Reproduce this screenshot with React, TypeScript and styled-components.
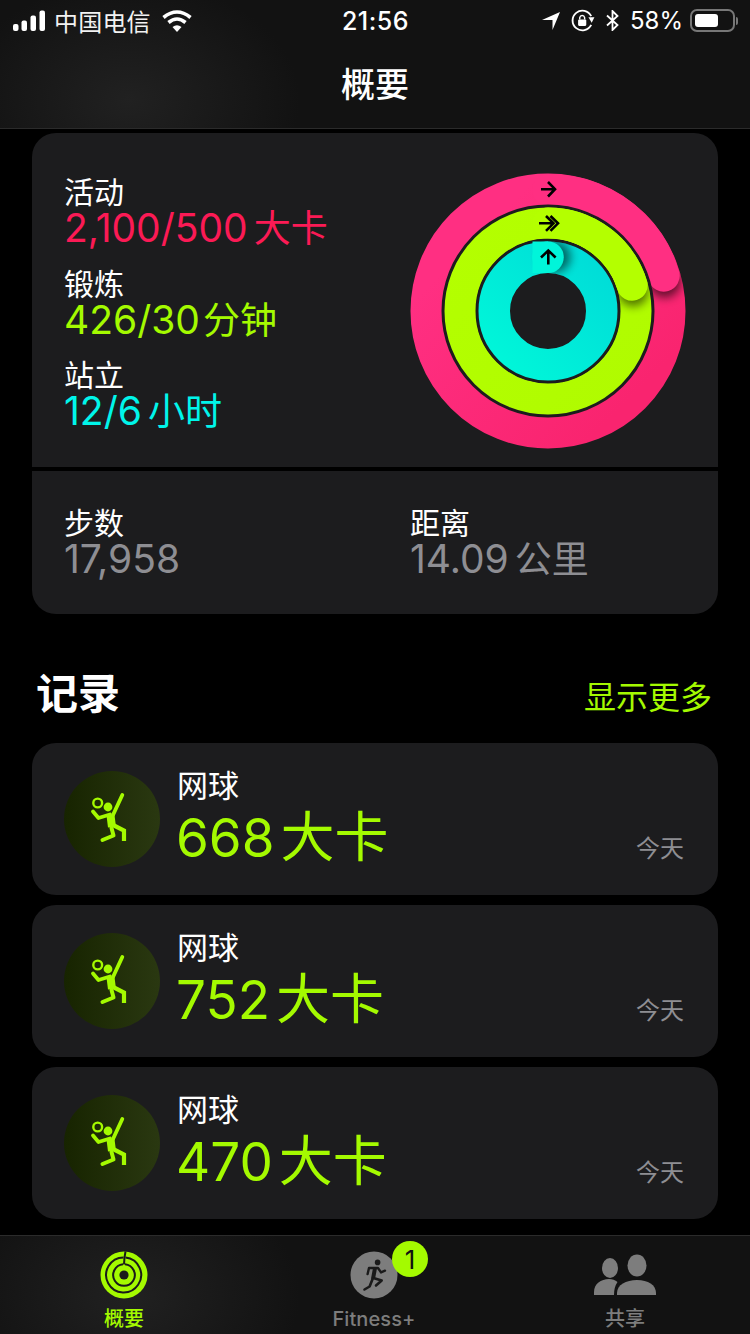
import { FC } from "react";
import styled, { createGlobalStyle } from "styled-components";

const GREEN = "#a4fa00";
const CARD = "#1c1c1e";
const FONT = `Inter, "Noto Sans CJK SC", "Noto Sans", sans-serif`;

const GlobalStyle = createGlobalStyle`
  html, body {
    margin: 0;
    padding: 0;
    background: #000;
  }
  * {
    box-sizing: border-box;
  }
`;

const records = ["668", "752", "470"];

const polar = (r: number, deg: number) => {
  const a = (deg * Math.PI) / 180;
  return { x: 140 + r * Math.sin(a), y: 140 - r * Math.cos(a) };
};

const arcPath = (r: number, deg: number) => {
  const end = polar(r, deg);
  const large = deg > 180 ? 1 : 0;
  return `M140 ${140 - r}A${r} ${r} 0 ${large} 1 ${end.x} ${end.y}`;
};

const Rings: FC = () => {
  const pinkEnd = polar(121, 73);
  const greenEnd = polar(88, 73);
  return (
    <RingSvg viewBox="0 0 280 280" width="280" height="280">
      <defs>
        <linearGradient id="pink" x1="0.2" y1="0.2" x2="0.85" y2="0.85">
          <stop offset="0" stopColor="#ff2f82" />
          <stop offset="1" stopColor="#f9246f" />
        </linearGradient>
        <linearGradient id="lime" x1="0" y1="0" x2="1" y2="1">
          <stop offset="0" stopColor="#b4ff00" />
          <stop offset="1" stopColor="#b0fb00" />
        </linearGradient>
        <linearGradient id="cyan" x1="0" y1="1" x2="1" y2="0">
          <stop offset="0" stopColor="#00f7d9" />
          <stop offset="1" stopColor="#00dcd8" />
        </linearGradient>
        <filter id="blur" x="-60%" y="-60%" width="220%" height="220%">
          <feGaussianBlur stdDeviation="5" />
        </filter>
        <clipPath id="pinkClip">
          <path clipRule="evenodd" d="M140 2.500a137.500 137.500 0 1 0 .01 0zM140 34a106 106 0 1 1 -.01 0z" />
        </clipPath>
        <clipPath id="limeClip">
          <path clipRule="evenodd" d="M140 36.500a103.500 103.500 0 1 0 .01 0zM140 67.500a72.500 72.500 0 1 1 -.01 0z" />
        </clipPath>
        <clipPath id="cyanClip">
          <path clipRule="evenodd" d="M140 70.500a69.500 69.500 0 1 0 .01 0zM140 102a38 38 0 1 1 -.01 0z" />
        </clipPath>
      </defs>

      <circle cx="140" cy="140" r="121" fill="none" stroke="url(#pink)" strokeWidth="33" />
      <g clipPath="url(#pinkClip)">
        <circle cx={pinkEnd.x + 1} cy={pinkEnd.y + 6} r="16" fill="#000" opacity="0.6" filter="url(#blur)" />
      </g>
      <path d={arcPath(121, 73)} fill="none" stroke="#ff2f82" strokeWidth="32" strokeLinecap="round" />

      <circle cx="140" cy="140" r="88" fill="none" stroke={CARD} strokeWidth="37" />
      <circle cx="140" cy="140" r="88" fill="none" stroke="url(#lime)" strokeWidth="31" />
      <g clipPath="url(#limeClip)">
        <circle cx={greenEnd.x + 1} cy={greenEnd.y + 6} r="15" fill="#000" opacity="0.55" filter="url(#blur)" />
      </g>
      <path d={arcPath(88, 73)} fill="none" stroke="#b4ff00" strokeWidth="31" strokeLinecap="round" />

      <circle cx="140" cy="140" r="55" fill="none" stroke={CARD} strokeWidth="34" />
      <circle cx="140" cy="140" r="53.750" fill="none" stroke="url(#cyan)" strokeWidth="31.500" />
      <g clipPath="url(#cyanClip)">
        <circle cx="147" cy="86" r="15.500" fill="#000" opacity="0.55" filter="url(#blur)" />
      </g>
      <circle cx="140" cy="86.250" r="15.750" fill="#00f5da" />
      <path d="M124.500 70.500H140V102H124.500Z" fill="#00f5da" />

      <g fill="none" stroke="#000" strokeWidth="2.600">
        <path d="M133 18.200H146.500M140 11L147 18.200L140 25.500" />
        <path d="M131 52.300H145M138 45L145.500 52.300L138 59.800M142.500 45L150 52.300L142.500 59.800" />
        <path d="M140.300 93.500V80M133 86.500L140.300 79.500L147.600 86.500" />
      </g>
    </RingSvg>
  );
};

const TennisIcon: FC = () => (
  <svg viewBox="0 0 96 96" width="96" height="96">
    <g fill="none" stroke={GREEN} strokeLinecap="round" strokeLinejoin="round">
      <circle cx="33.700" cy="32" r="4.400" strokeWidth="2.400" />
      <path d="M29 40.500L34.500 47L46 43.500" strokeWidth="3.800" />
      <path d="M49 44L58.300 24" strokeWidth="3.800" />
      <path d="M46.500 44L48 56" strokeWidth="8" strokeLinecap="butt" />
      <path d="M49 54L60 59.500V70" strokeWidth="4.200" strokeLinecap="butt" strokeLinejoin="miter" />
      <path d="M47.500 57L49.500 64.500L38.500 69" strokeWidth="4" />
    </g>
    <circle cx="44" cy="36" r="4.400" fill={GREEN} />
  </svg>
);

const App: FC = () => (
  <Page>
    <GlobalStyle />
    <Header>
      <StatusBar>
        <StatusLeft>
          <svg width="33" height="21" viewBox="0 0 33 21">
            <rect x="0" y="14" width="5.500" height="7" rx="2" fill="#fff" />
            <rect x="8.500" y="10.500" width="5.500" height="10.500" rx="2" fill="#fff" />
            <rect x="17.500" y="5.500" width="5.500" height="15.500" rx="2" fill="#fff" />
            <rect x="26.500" y="0.500" width="5.500" height="20.500" rx="2" fill="#fff" />
          </svg>
          <Carrier>中国电信</Carrier>
          <svg width="30" height="22" viewBox="0 0 30 22">
            <path d="M15 22L10.500 17Q15 13.500 19.500 17Z" fill="#fff" />
            <path d="M6.500 12.500Q15 5.500 23.500 12.500" fill="none" stroke="#fff" strokeWidth="3.600" />
            <path d="M1.500 7.500Q15 -3.500 28.500 7.500" fill="none" stroke="#fff" strokeWidth="3.600" />
          </svg>
        </StatusLeft>
        <Clock>21:56</Clock>
        <StatusRight>
          <svg width="18" height="18" viewBox="0 0 18 18">
            <path d="M18 0L10.500 18V8H0Z" fill="#fff" />
          </svg>
          <svg width="24" height="23" viewBox="0 0 22 21">
            <path d="M18.500 14.500A9 9 0 1 1 18.500 6.500" fill="none" stroke="#fff" strokeWidth="1.700" />
            <path d="M16 7.500L21.500 7.500L19 12.500Z" fill="#fff" />
            <rect x="6.500" y="9.500" width="7.500" height="6" rx="1" fill="#fff" />
            <path d="M8 9.500V7.800a2.300 2.300 0 0 1 4.500 0V9.500" fill="none" stroke="#fff" strokeWidth="1.300" />
          </svg>
          <svg width="13" height="21" viewBox="0 0 13 21">
            <path d="M1 5.500L11.500 15L6.500 20V1L11.500 6L1 15.500" fill="none" stroke="#fff" strokeWidth="1.800" />
          </svg>
          <Percent>58%</Percent>
          <BatteryBody>
            <BatteryFill />
          </BatteryBody>
          <BatteryTip />
        </StatusRight>
      </StatusBar>
      <NavTitle>概要</NavTitle>
    </Header>

    <Content>
      <Summary>
        <RingPanel>
          <Stats>
            <Stat>
              <Label>活动</Label>
              <Value color="#fb1a55">2,100/500<Unit>大卡</Unit></Value>
            </Stat>
            <Stat>
              <Label>锻炼</Label>
              <Value color={GREEN}>426/30<Unit gap={3}>分钟</Unit></Value>
            </Stat>
            <Stat>
              <Label>站立</Label>
              <Value color="#00f5ea">12/6<Unit>小时</Unit></Value>
            </Stat>
          </Stats>
          <Rings />
        </RingPanel>
        <TotalsPanel>
          <Stat>
            <Label>步数</Label>
            <Value color="#8e8e93">17,958</Value>
          </Stat>
          <Stat>
            <Label>距离</Label>
            <Value color="#8e8e93">14.09<Unit>公里</Unit></Value>
          </Stat>
        </TotalsPanel>
      </Summary>

      <SectionHead>
        <SectionTitle>记录</SectionTitle>
        <ShowMore>显示更多</ShowMore>
      </SectionHead>

      <RecordList>
        {records.map((value) => (
          <RecordCard key={value}>
            <RecordIcon>
              <TennisIcon />
            </RecordIcon>
            <RecordText>
              <RecordName>网球</RecordName>
              <RecordValue>{value}<RecordUnit>大卡</RecordUnit></RecordValue>
            </RecordText>
            <RecordDate>今天</RecordDate>
          </RecordCard>
        ))}
      </RecordList>
    </Content>

    <TabBar>
      <Tab>
        <svg width="48" height="48" viewBox="0 0 48 48">
          <circle cx="24" cy="24" r="23.500" fill={GREEN} />
          <g fill="none" stroke="#1a1a1a" strokeWidth="2">
            <path d="M25.500 6.600A17.500 17.500 0 1 1 23.500 6.500" />
            <path d="M25 13.300A10.800 10.800 0 1 1 23 13.300" />
            <path d="M25.500 0.500L24.500 6.500L24 13.500" />
          </g>
          <circle cx="24" cy="24" r="4.600" fill="#1a1a1a" />
        </svg>
        <TabLabel active>概要</TabLabel>
      </Tab>
      <Tab>
        <TabIconWrap>
          <svg width="48" height="48" viewBox="0 0 48 48">
            <circle cx="24" cy="24" r="23.500" fill="#7d7d7d" />
            <circle cx="27.600" cy="11.400" r="2.800" fill="#1a1a1a" />
            <g fill="none" stroke="#1a1a1a" strokeWidth="2.400" strokeLinecap="round" strokeLinejoin="round">
              <path d="M17.600 23L19 17H28L31 21.400L35 19.700" />
              <path d="M25 17L23 28" strokeWidth="4" strokeLinecap="butt" />
              <path d="M23 27L19.600 35.500L14.500 38.500" strokeWidth="2.600" />
              <path d="M25 27.500L31.700 29.500L26 34.500" strokeWidth="2.600" />
            </g>
          </svg>
          <Badge>1</Badge>
        </TabIconWrap>
        <TabLabel>Fitness+</TabLabel>
      </Tab>
      <Tab>
        <svg width="62" height="48" viewBox="0 0 62 48">
          <ellipse cx="16" cy="17" rx="8" ry="10" fill="#7d7d7d" />
          <ellipse cx="43" cy="14.500" rx="9.500" ry="11" fill="#7d7d7d" />
          <path d="M0 44V41C0 33 7 28 15 28Q20 28 23.500 31Q20 36 20 44Z" fill="#7d7d7d" />
          <path d="M23 44V42C23 34 32 29 43 29S62 34 62 42V44Z" fill="#7d7d7d" />
        </svg>
        <TabLabel>共享</TabLabel>
      </Tab>
    </TabBar>
  </Page>
);

export default App;

const Page = styled.div`
  width: 750px;
  height: 1334px;
  overflow: hidden;
  display: flex;
  flex-direction: column;
  background: #000;
  color: #fff;
  font-family: ${FONT};
`;

const Header = styled.header`
  height: 129px;
  flex-shrink: 0;
  border-bottom: 1px solid #2b2b2b;
  background: radial-gradient(ellipse 170px 120px at 130px 100px, #212121, #121212);
`;

const StatusBar = styled.div`
  height: 40px;
  padding: 1px 12px 0 13px;
  display: grid;
  grid-template-columns: 1fr auto 1fr;
  align-items: center;
`;

const StatusLeft = styled.div`
  display: flex;
  align-items: center;
  gap: 8px;

  svg:last-child {
    margin-left: 3px;
  }
`;

const Carrier = styled.span`
  font-size: 24px;
  color: #f2f2f2;
  letter-spacing: 0.200px;
`;

const Clock = styled.span`
  font-size: 25px;
  font-weight: 500;
  letter-spacing: 0.500px;
`;

const StatusRight = styled.div`
  display: flex;
  align-items: center;
  justify-content: flex-end;
  gap: 11px;
`;

const Percent = styled.span`
  font-size: 24px;
  margin-right: -4px;
`;

const BatteryBody = styled.div`
  width: 45px;
  height: 23px;
  padding: 3px;
  border: 2px solid #777;
  border-radius: 7px;
`;

const BatteryFill = styled.div`
  width: 23px;
  height: 100%;
  background: #fff;
  border-radius: 3px;
`;

const BatteryTip = styled.div`
  width: 2px;
  height: 8px;
  margin-left: -10px;
  background: #777;
  border-radius: 0 2px 2px 0;
`;

const NavTitle = styled.h1`
  margin: 0;
  height: 88px;
  padding-bottom: 3px;
  display: flex;
  align-items: center;
  justify-content: center;
  font-size: 34px;
  font-weight: 500;
`;

const Content = styled.main`
  flex: 1;
  min-height: 0;
  padding: 4px 32px 0;
`;

const Summary = styled.section`
  display: flex;
  flex-direction: column;
  gap: 4px;
`;

const RingPanel = styled.div`
  height: 334px;
  padding: 41px 30px 0 32px;
  display: flex;
  justify-content: space-between;
  background: ${CARD};
  border-radius: 24px 24px 0 0;
`;

const RingSvg = styled.svg`
  margin-top: -3px;
  flex-shrink: 0;
`;

const Stats = styled.div`
  display: flex;
  flex-direction: column;
  gap: 17.500px;
`;

const Stat = styled.div`
  display: flex;
  flex-direction: column;
`;

const Label = styled.span`
  margin-top: 2px;
  font-size: 30px;
  line-height: 33px;
  color: #fff;
`;

const Value = styled.span<{ color: string }>`
  height: 40px;
  margin-top: -1px;
  font-size: 39px;
  line-height: 40px;
  white-space: nowrap;
  color: ${({ color }) => color};
`;

const Unit = styled.span<{ gap?: number }>`
  margin-left: ${({ gap }) => gap ?? 6}px;
  font-size: 37px;
`;

const TotalsPanel = styled.div`
  height: 143px;
  padding: 34px 32px 0;
  display: grid;
  grid-template-columns: 346px 1fr;
  background: ${CARD};
  border-radius: 0 0 24px 24px;
`;

const SectionHead = styled.div`
  height: 129px;
  padding: 23px 6px 0 4px;
  display: flex;
  align-items: center;
  justify-content: space-between;
`;

const SectionTitle = styled.h2`
  margin: 0;
  font-size: 42px;
  font-weight: 700;
`;

const ShowMore = styled.span`
  margin-top: 10px;
  font-size: 32px;
  color: ${GREEN};
`;

const RecordList = styled.div`
  display: flex;
  flex-direction: column;
  gap: 10px;
`;

const RecordCard = styled.article`
  height: 152px;
  padding: 28px 34px 28px 32px;
  display: flex;
  gap: 17px;
  background: ${CARD};
  border-radius: 24px;
`;

const RecordIcon = styled.div`
  width: 96px;
  height: 96px;
  flex-shrink: 0;
  border-radius: 50%;
  background: linear-gradient(90deg, #172400, #2a3811);
`;

const RecordText = styled.div`
  display: flex;
  flex-direction: column;
  margin-top: -3px;
`;

const RecordName = styled.span`
  font-size: 31px;
  line-height: 36px;
`;

const RecordValue = styled.span`
  height: 66px;
  margin-top: 1px;
  margin-left: -1px;
  font-size: 53px;
  line-height: 66px;
  white-space: nowrap;
  color: ${GREEN};
`;

const RecordUnit = styled.span`
  margin-left: 6px;
  font-size: 54px;
`;

const RecordDate = styled.span`
  margin-left: auto;
  align-self: flex-end;
  font-size: 24px;
  line-height: 36px;
  color: #8e8e93;
`;

const TabBar = styled.nav`
  height: 99px;
  flex-shrink: 0;
  padding-top: 15px;
  display: grid;
  grid-template-columns: 248px 252px 250px;
  border-top: 1px solid #2b2b2b;
  background: radial-gradient(ellipse 170px 120px at 130px 60px, #212121, #121212);
`;

const Tab = styled.div`
  display: flex;
  flex-direction: column;
  align-items: center;
  gap: 5px;
`;

const TabIconWrap = styled.div`
  position: relative;
  height: 48px;
`;

const Badge = styled.span`
  position: absolute;
  top: -10px;
  left: 42px;
  width: 36px;
  height: 36px;
  border-radius: 50%;
  display: flex;
  align-items: center;
  justify-content: center;
  background: ${GREEN};
  color: #111;
  font-size: 26px;
`;

const TabLabel = styled.span<{ active?: boolean }>`
  font-size: 20px;
  line-height: 30px;
  font-weight: 500;
  letter-spacing: 0.100px;
  color: ${({ active }) => (active ? GREEN : "#7d7d7d")};
`;
